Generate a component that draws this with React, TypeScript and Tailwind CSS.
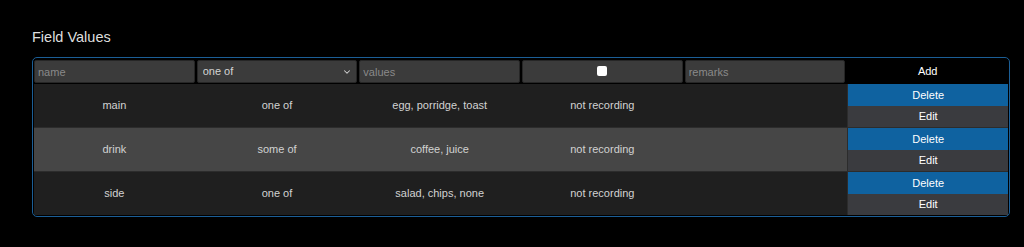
import { ChevronDown } from 'lucide-react';

const rows = [
  { name: 'main', kind: 'one of', values: 'egg, porridge, toast', rec: 'not recording', remarks: '', bg: 'bg-[#1f1f1f]' },
  { name: 'drink', kind: 'some of', values: 'coffee, juice', rec: 'not recording', remarks: '', bg: 'bg-[#464646]' },
  { name: 'side', kind: 'one of', values: 'salad, chips, none', rec: 'not recording', remarks: '', bg: 'bg-[#1f1f1f]' },
];

const inputCls =
  'block h-[23px] w-full rounded-[2px] border border-[#262626] bg-[#3b3b3b] px-[3px] text-[11px] text-[#d4d4d4] placeholder:text-[#8a8a8a] outline-none';

export default function App() {
  return (
    <div className="min-h-screen bg-black px-[32px] pt-[28px] font-['Liberation_Sans',Arial,sans-serif]">
      <h2 className="text-[14.5px] leading-[18px] text-[#dedede]">Field Values</h2>

      <div className="mt-[11px] w-[978px] rounded-[5px] border border-[#1b5e96] p-px">
        {/* input row */}
        <div className="grid h-[25px] grid-cols-6 gap-x-[2px] pt-[1px] pb-[1px]">
          <input className={inputCls} placeholder="name" />
          <div className="relative h-[23px]">
            <select className={inputCls + ' appearance-none pl-[5px]'} defaultValue="one of">
              <option>one of</option>
              <option>some of</option>
            </select>
            <ChevronDown className="pointer-events-none absolute right-[5px] top-[7px] h-[10px] w-[10px] text-[#d4d4d4]" strokeWidth={2.5} />
          </div>
          <input className={inputCls} placeholder="values" />
          <div className="flex h-[23px] justify-center rounded-[2px] border border-[#262626] bg-[#3b3b3b] pt-[5px]">
            <input type="checkbox" className="block h-[10px] w-[10px] appearance-none rounded-[2px] bg-white" />
          </div>
          <input className={inputCls} placeholder="remarks" />
          <button className="h-[23px] bg-black text-[11px] text-white">Add</button>
        </div>

        {/* data rows */}
        <div className="flex flex-col">
          {rows.map((r, i) => (
            <div
              key={r.name}
              className={'grid grid-cols-6 gap-x-[2px] ' + (i < rows.length - 1 ? 'h-[44px] border-b border-[#2c2c2c] ' : 'h-[43px] ') + r.bg}
            >
              <div className="flex items-center justify-center text-[11px] text-[#d2d2d2]">{r.name}</div>
              <div className="flex items-center justify-center text-[11px] text-[#d2d2d2]">{r.kind}</div>
              <div className="flex items-center justify-center text-[11px] text-[#d2d2d2]">{r.values}</div>
              <div className="flex items-center justify-center text-[11px] text-[#d2d2d2]">{r.rec}</div>
              <div className="flex items-center justify-center text-[11px] text-[#d2d2d2]">{r.remarks}</div>
              <div className="flex flex-col border-l border-[#2c2c2c]">
                <button className="h-[22px] bg-[#0f62a0] text-[11px] text-white">Delete</button>
                <button className="flex-1 bg-[#3a3b3f] text-[11px] text-white">Edit</button>
              </div>
            </div>
          ))}
        </div>
      </div>
    </div>
  );
}
